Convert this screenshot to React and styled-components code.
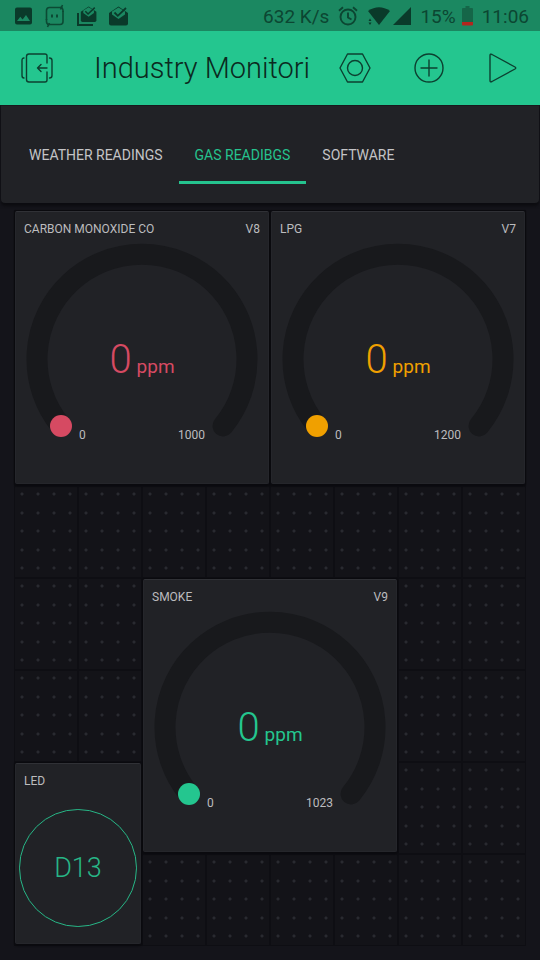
import React from 'react';
import styled, { createGlobalStyle } from 'styled-components';

const GlobalStyle = createGlobalStyle`
  *, *::before, *::after { box-sizing: border-box; }
  body {
    margin: 0;
    background: #14141a;
    font-family: Roboto, "Liberation Sans", sans-serif;
  }
  button { font: inherit; border: 0; background: none; padding: 0; cursor: pointer; }
`;

const Screen = styled.div`
  display: flex;
  flex-direction: column;
  min-height: 100vh;
  background: #14141a;
`;

const StatusBar = styled.header`
  display: flex;
  align-items: center;
  justify-content: space-between;
  height: 31px;
  padding: 0 11px 0 14px;
  background: #1b8861;
  color: #0c4632;
`;

const StatusGroup = styled.div`
  display: flex;
  align-items: center;
  gap: ${({ $gap }) => $gap}px;
`;

const StatusText = styled.span`
  font-size: 19px;
  line-height: 24px;
  padding-top: 2px;
  white-space: nowrap;
`;

const Toolbar = styled.div`
  display: flex;
  align-items: center;
  height: 74px;
  padding: 0 18px;
  background: #24c68f;
  color: #0c4030;
`;

const Title = styled.h1`
  flex: 1;
  margin: 0 0 0 38px;
  overflow: hidden;
  white-space: nowrap;
  font-size: 29px;
  line-height: 40px;
  font-weight: 300;
  color: #0b2a20;
`;

const Actions = styled.div`
  display: flex;
  gap: 36px;
`;

const IconButton = styled.button`
  display: grid;
  place-items: center;
  width: 38px;
  height: 38px;
  color: inherit;
`;

const TabBar = styled.nav`
  display: flex;
  align-items: center;
  height: 98px;
  margin: 0 1px;
  padding: 0 12px;
  border-top: 1px solid #18191d;
  border-radius: 0 0 4px 4px;
  background: #212226;
  box-shadow: 0 3px 3px #0c0c10;
`;

const Tab = styled.button`
  height: 58px;
  padding: 3px 16px 0;
  border-bottom: 3px solid ${({ $active }) => ($active ? '#25c38e' : 'transparent')};
  color: ${({ $active }) => ($active ? '#25c38e' : '#c4c4c6')};
  font-size: 14px;
  line-height: 20px;
  white-space: nowrap;
`;

const dotRow = (y) =>
  `radial-gradient(circle at 8px ${y}px, #292a30 1px, transparent 2px) 0 0 / 16px 92px`;

const Board = styled.main`
  display: grid;
  grid-template-columns: repeat(8, minmax(0, 1fr));
  grid-template-rows: repeat(8, 92px);
  margin: 7px 14px 14px;
  background:
    linear-gradient(to right, #0e0e13 1px, transparent 1px, transparent calc(100% - 1px), #0e0e13 calc(100% - 1px)) 0 0 / 12.5% 100%,
    linear-gradient(#0e0e13 1px, transparent 1px, transparent 91px, #0e0e13 91px) 0 0 / 100% 92px,
    ${[8, 27, 45, 64, 82].map(dotRow).join(',')},
    #131318;
`;

const Widget = styled.section`
  grid-area: ${({ $area }) => $area};
  display: flex;
  flex-direction: column;
  align-items: center;
  margin: 1px 1px 2px;
  border: 1px solid #25262b;
  border-top-color: #303136;
  border-radius: 2px;
  background: #212226;
  box-shadow: 0 0 1px 1px #0b0b0f, 0 2px 2px #0b0b0f;
`;

const WidgetHeader = styled.header`
  display: flex;
  justify-content: space-between;
  align-self: stretch;
  padding: 8px 8px 0;
  color: #bcbcbe;
  font-size: 12px;
  line-height: 18px;
`;

const WidgetName = styled.h2`
  margin: 0;
  font: inherit;
  white-space: nowrap;
`;

const GaugeFrame = styled.div`
  display: grid;
  width: 100%;
  max-width: 232px;
  margin-top: 5px;
  > * { grid-area: 1 / 1; }
`;

const Dial = styled.svg`
  display: block;
  width: 100%;
`;

const Reading = styled.div`
  display: flex;
  align-items: baseline;
  justify-content: center;
  gap: 5px;
  align-self: center;
  padding-top: 38px;
  color: ${({ $color }) => $color};
`;

const ReadingValue = styled.span`
  font-size: 40px;
  line-height: 48px;
  font-weight: 300;
`;

const ReadingUnit = styled.span`
  font-size: 19px;
`;

const Range = styled.div`
  display: flex;
  justify-content: space-between;
  align-self: end;
  padding: 0 53px;
  color: #bcbcbe;
  font-size: 12px;
  line-height: 8px;
`;

const LedButton = styled.button`
  width: 118px;
  max-width: 95%;
  aspect-ratio: 1;
  margin-top: 19px;
  border: 1px solid #27b686;
  border-radius: 50%;
  color: #27b686;
  font-size: 27px;
  font-weight: 300;
`;

function Gauge({ name, pin, value, unit, min, max, color, area }) {
  return (
    <Widget $area={area}>
      <WidgetHeader>
        <WidgetName>{name}</WidgetName>
        <span>{pin}</span>
      </WidgetHeader>
      <GaugeFrame role="meter" aria-label={name} aria-valuenow={value} aria-valuemin={min} aria-valuemax={max}>
        <Dial viewBox="0 0 232 196" aria-hidden="true">
          <path d="M35 183A105 105 0 1 1 197 183" fill="none" stroke="#18191c" strokeWidth="21" strokeLinecap="round" />
          <circle cx="35" cy="183" r="11" fill={color} />
        </Dial>
        <Reading $color={color}>
          <ReadingValue>{value}</ReadingValue>
          <ReadingUnit>{unit}</ReadingUnit>
        </Reading>
        <Range>
          <span>{min}</span>
          <span>{max}</span>
        </Range>
      </GaugeFrame>
    </Widget>
  );
}

const PictureIcon = () => (
  <svg width="20" height="20" viewBox="0 0 20 20" aria-hidden="true">
    <path fill="#0a3a2a" fillRule="evenodd" d="M3 1.500h13q2 0 2 2v13q0 2-2 2H3q-2 0-2-2v-13q0-2 2-2zM3 15h13l-4-6-3.400 4.400-2.300-2.700z" />
  </svg>
);

const ChatIcon = () => (
  <svg width="20" height="24" viewBox="0 0 20 24" fill="none" stroke="#0c4a34" strokeWidth="1.600" aria-hidden="true">
    <path d="M17.500 3.500H4.500Q1.500 3.500 1.500 6.500V16M2 20.500h13q3 0 3-3V7" />
    <path d="M1.500 15v2.500q0 3 3 3M18 8V6.500q0-3-3-3M15.500 5.500l2-4.500M4.500 19 2.500 23" />
    <path d="M7 10.500v3M12 10.500v3" strokeWidth="2" />
  </svg>
);

const MailIcon = ({ stacked }) => (
  <svg width="21" height="22" viewBox="0 0 21 22" aria-hidden="true">
    {stacked && <path d="M2 8v12h15" fill="none" stroke="#0a3a2a" strokeWidth="2" />}
    <g transform={stacked ? 'translate(4 1) scale(.82)' : 'translate(0 1)'}>
      <path fill="#0a3a2a" d="M1 7 10.500.500 20 7v10.500q0 2-2 2H3q-2 0-2-2z" />
      <path fill="#1b8861" d="M4 5.500 10.500 1.500 17 5.500v3L10.500 13 4 8.500z" />
      <path d="m6.500 6.500 3.300 3.300L18 2" fill="none" stroke="#0a3a2a" strokeWidth="1.800" />
    </g>
  </svg>
);

const AlarmIcon = () => (
  <svg width="20" height="20" viewBox="0 0 20 20" fill="none" stroke="#0c4632" strokeWidth="1.900" aria-hidden="true">
    <circle cx="10" cy="11" r="7.500" />
    <path d="M10 6.500V11.500l3.500 2M1 4.700l4-3.400M19 4.700l-4-3.400" />
  </svg>
);

const WifiIcon = () => (
  <svg width="23" height="20" viewBox="0 0 23 20" fill="#0a3a2a" aria-hidden="true">
    <path d="M1 5Q12 -2.500 23 5L12 19z" />
    <path d="M1.500 15 3 12.500 4.500 15zM1.500 16.500h3L3 19z" />
  </svg>
);

const SignalIcon = () => (
  <svg width="18" height="18" viewBox="0 0 18 18" fill="#0a3a2a" aria-hidden="true">
    <path d="M18 0v18H0z" />
  </svg>
);

const BatteryIcon = () => (
  <svg width="11" height="20" viewBox="0 0 11 20" aria-hidden="true">
    <path d="M3.500 0h4v2H10q1 0 1 1v13H0V3q0-1 1-1h2.500z" fill="#156648" />
    <path d="M0 16h11v2.500q0 1-1 1H1q-1 0-1-1z" fill="#b3261e" />
  </svg>
);

const line = { fill: 'none', stroke: 'currentColor', strokeWidth: 1.4, strokeLinecap: 'round', strokeLinejoin: 'round', 'aria-hidden': true };

const ExitIcon = () => (
  <svg width="32" height="30" viewBox="0 0 32 30" {...line}>
    <path d="M26 10V3q0-2-2-2H8Q5.500 1 5.500 3.500v23Q5.500 29 8 29h16q2 0 2-2v-8" />
    <path d="M26 15H16.500M20 11.500 16.500 15l3.500 3.500M3 5Q1 5 1 7.500v15Q1 25 3 25M28.500 5q2.500 0 2.500 2.500v15q0 2.500-2.500 2.500" />
  </svg>
);

const NutIcon = () => (
  <svg width="32" height="30" viewBox="0 0 32 30" {...line}>
    <path d="M8.500 1h15L31 15l-7.500 14h-15L1 15z" />
    <circle cx="16" cy="15" r="7.500" />
  </svg>
);

const AddIcon = () => (
  <svg width="30" height="30" viewBox="0 0 30 30" {...line}>
    <circle cx="15" cy="15" r="14" />
    <path d="M15 7v16M7 15h16" />
  </svg>
);

const PlayIcon = () => (
  <svg width="28" height="30" viewBox="0 0 28 30" {...line}>
    <path d="M1 2.500Q1 .5 3 1.500L26 14q1.500 1 0 2L3 28.500q-2 1-2-1z" />
  </svg>
);

const TABS = ['WEATHER READINGS', 'GAS READIBGS', 'SOFTWARE'];

export default function App() {
  const [active, setActive] = React.useState('GAS READIBGS');
  return (
    <Screen>
      <GlobalStyle />
      <StatusBar>
        <StatusGroup $gap={11}>
          <PictureIcon />
          <ChatIcon />
          <MailIcon stacked />
          <MailIcon />
        </StatusGroup>
        <StatusGroup $gap={9}>
          <StatusText>632 K/s</StatusText>
          <AlarmIcon />
          <StatusGroup $gap={3}>
            <WifiIcon />
            <SignalIcon />
          </StatusGroup>
          <StatusGroup $gap={6}>
            <StatusText>15%</StatusText>
            <BatteryIcon />
          </StatusGroup>
          <StatusText>11:06</StatusText>
        </StatusGroup>
      </StatusBar>
      <Toolbar>
        <IconButton aria-label="Exit project"><ExitIcon /></IconButton>
        <Title>Industry Monitori</Title>
        <Actions>
          <IconButton aria-label="Project settings"><NutIcon /></IconButton>
          <IconButton aria-label="Add widget"><AddIcon /></IconButton>
          <IconButton aria-label="Run project"><PlayIcon /></IconButton>
        </Actions>
      </Toolbar>
      <TabBar>
        {TABS.map((tab) => (
          <Tab key={tab} $active={tab === active} aria-pressed={tab === active} onClick={() => setActive(tab)}>
            {tab}
          </Tab>
        ))}
      </TabBar>
      <Board>
        <Gauge name="CARBON MONOXIDE CO" pin="V8" value={0} unit="ppm" min={0} max={1000} color="#d64a62" area="1 / 1 / 4 / 5" />
        <Gauge name="LPG" pin="V7" value={0} unit="ppm" min={0} max={1200} color="#f0a000" area="1 / 5 / 4 / 9" />
        <Gauge name="SMOKE" pin="V9" value={0} unit="ppm" min={0} max={1023} color="#24c68f" area="5 / 3 / 8 / 7" />
        <Widget $area="7 / 1 / 9 / 3">
          <WidgetHeader>
            <WidgetName>LED</WidgetName>
          </WidgetHeader>
          <LedButton aria-label="LED D13">D13</LedButton>
        </Widget>
      </Board>
    </Screen>
  );
}
